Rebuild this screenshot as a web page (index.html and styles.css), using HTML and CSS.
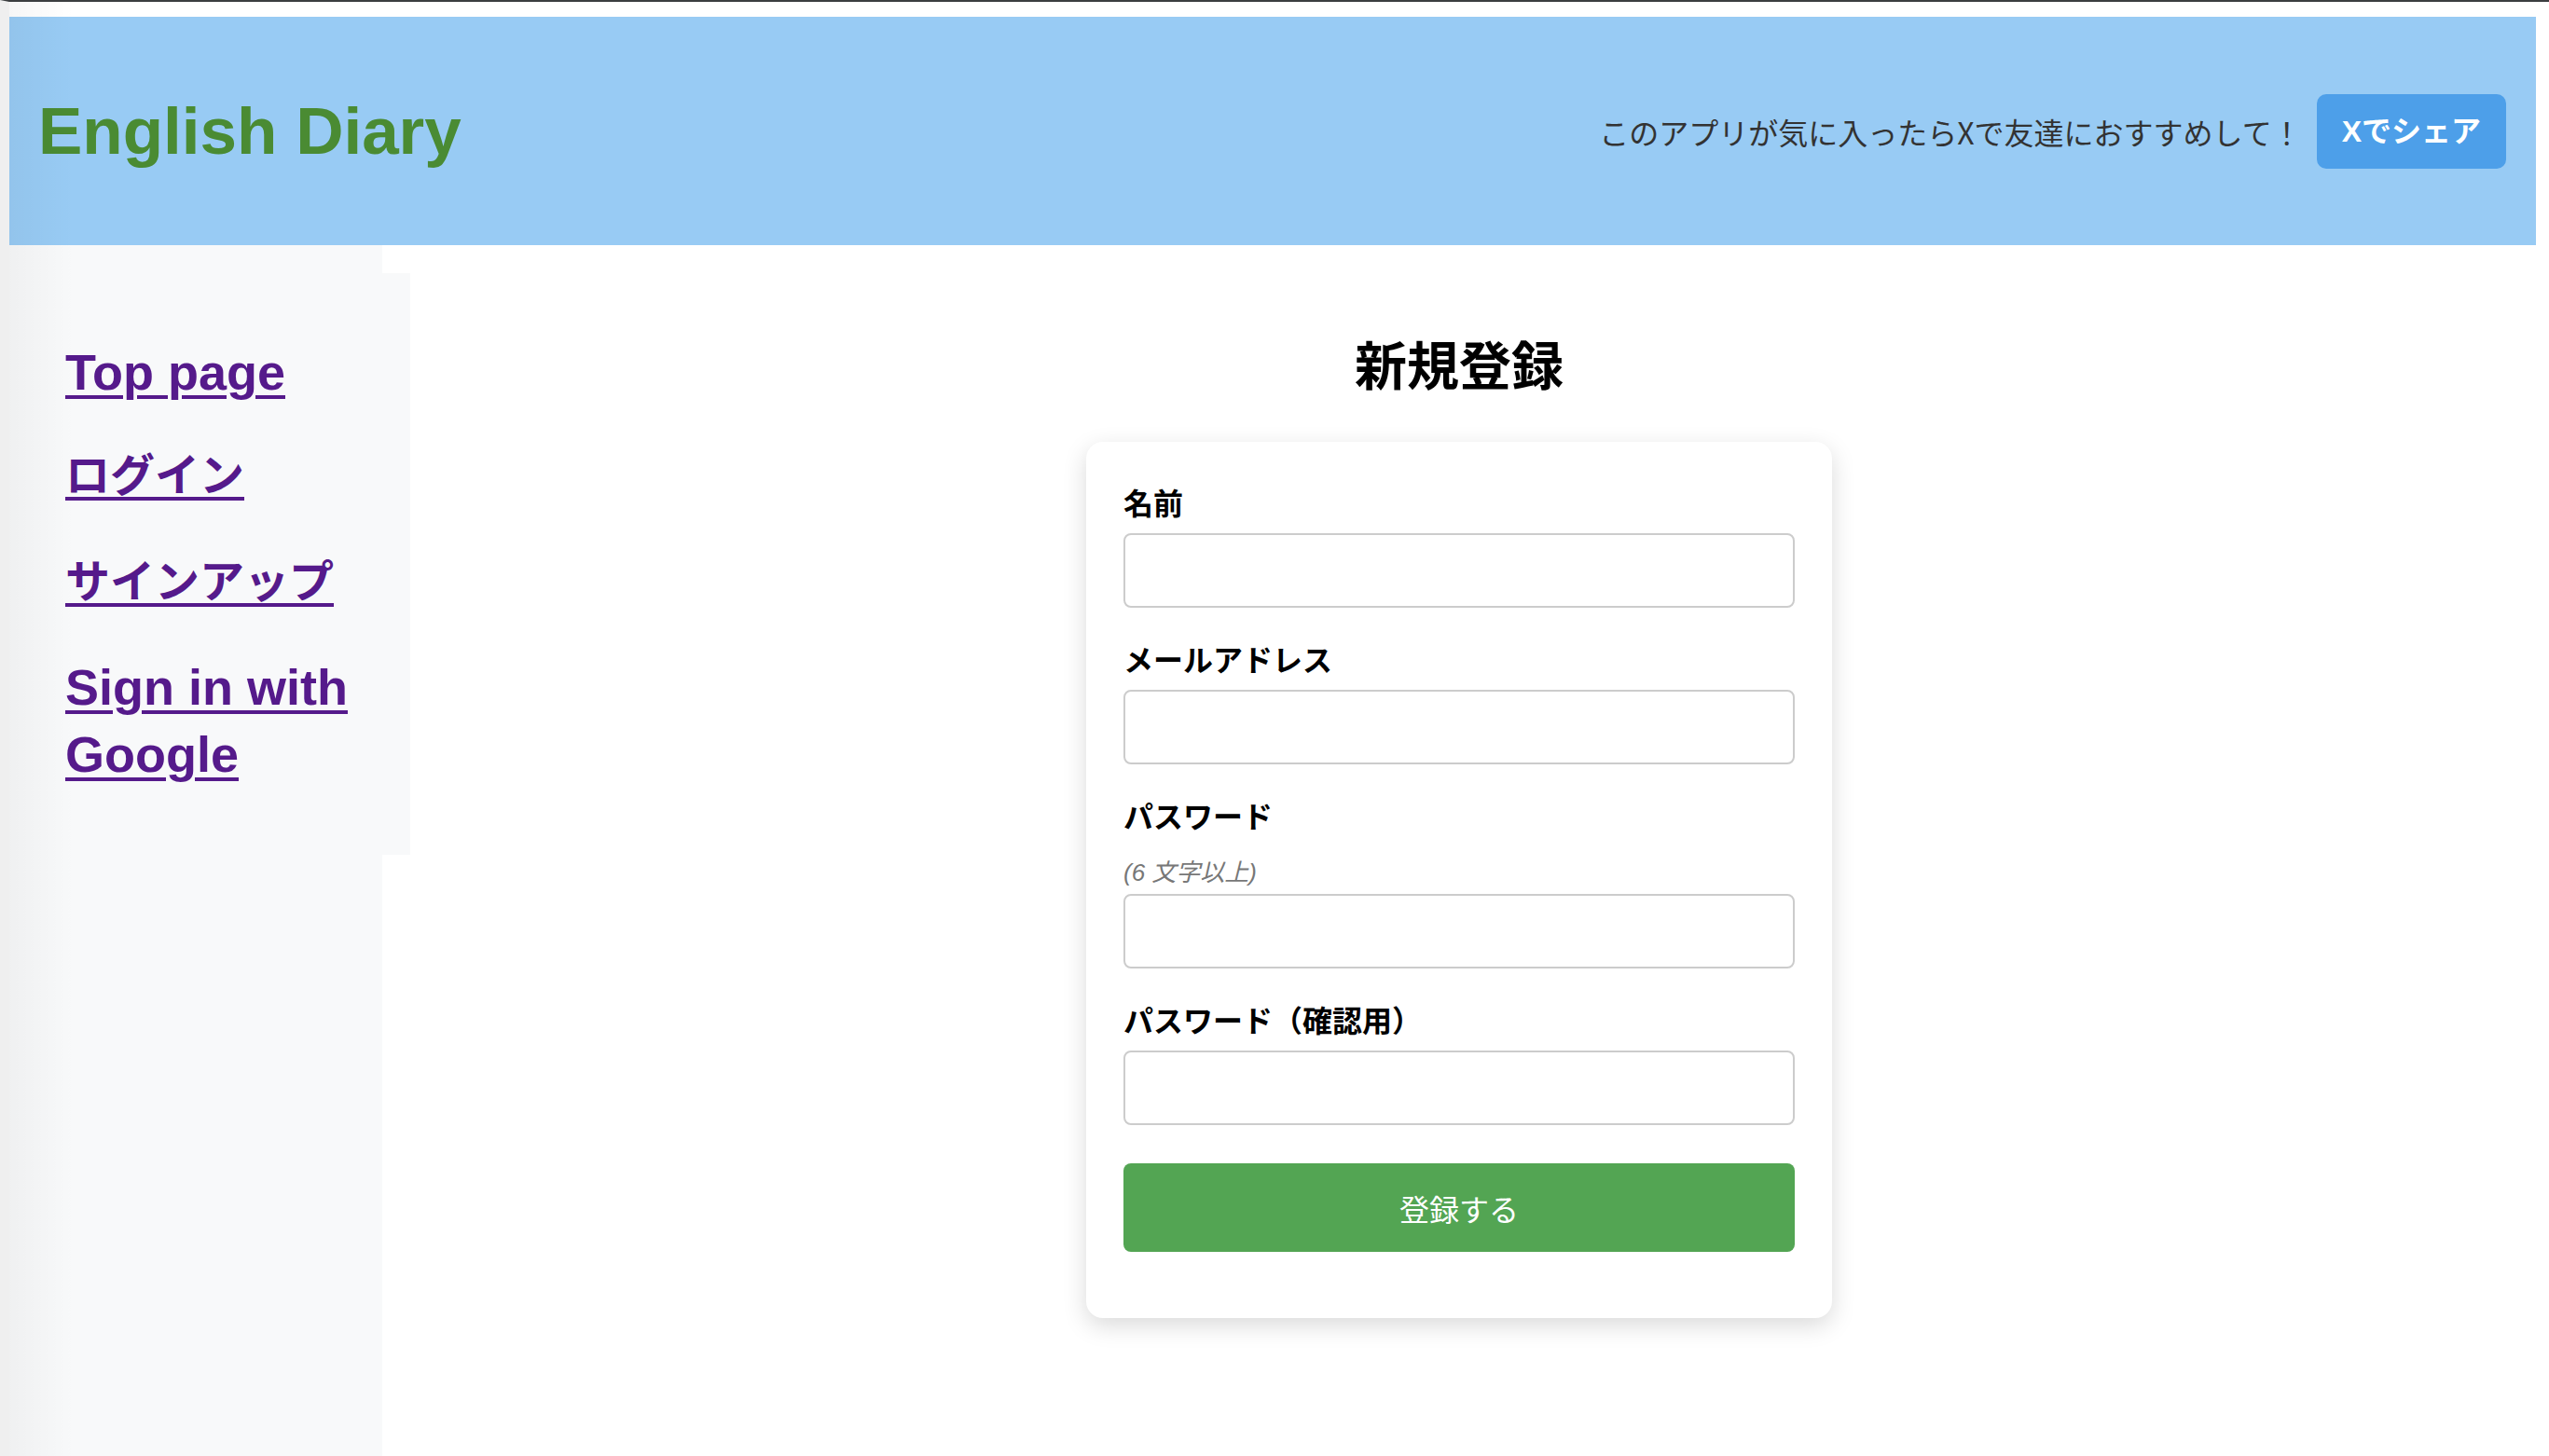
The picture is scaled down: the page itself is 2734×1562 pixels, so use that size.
FILE: index.html
```html
<!DOCTYPE html>
<html lang="ja">
<head>
    <meta charset="UTF-8">
    <meta name="viewport" content="width=device-width, initial-scale=1.0">
    <title>English Diary - 新規登録</title>
    <link rel="stylesheet" href="styles.css">
</head>
<body>
<div class="frame">

    <header class="site-header">
        <h1 class="logo">English Diary</h1>
        <div class="share">
            <p class="share-text">このアプリが気に入ったらXで友達におすすめして！</p>
            <button class="share-btn">Xでシェア</button>
        </div>
    </header>

    <div class="layout">
        <aside class="sidebar">
            <nav class="side-nav">
                <ul>
                    <li class="en"><a href="#">Top page</a></li>
                    <li><a href="#">ログイン</a></li>
                    <li><a href="#">サインアップ</a></li>
                    <li class="en"><a href="#">Sign in with Google</a></li>
                </ul>
            </nav>
        </aside>

        <main class="content">
            <h2 class="page-title">新規登録</h2>
            <form class="signup-card">
                <div class="form-group">
                    <label for="name">名前</label>
                    <input type="text" id="name">
                </div>
                <div class="form-group">
                    <label for="email">メールアドレス</label>
                    <input type="email" id="email">
                </div>
                <div class="form-group">
                    <label for="password">パスワード</label>
                    <em class="hint">(6 文字以上)</em>
                    <input type="password" id="password">
                </div>
                <div class="form-group">
                    <label for="password-confirm">パスワード（確認用）</label>
                    <input type="password" id="password-confirm">
                </div>
                <div class="form-group actions">
                    <button type="submit" class="submit-btn">登録する</button>
                </div>
            </form>
        </main>
    </div>

</div>
</body>
</html>
```

FILE: styles.css
```css
html, body {
    margin: 0;
    padding: 0;
    background-color: #fff;
}
body {
    font-family: "Liberation Sans", "Noto Sans CJK JP", sans-serif;
    color: #000;
}
.frame {
    position: relative;
    display: flex;
    flex-direction: column;
    min-height: 100vh;
    box-sizing: border-box;
    border-top: 2px solid #3b3e40;
    border-left: 10px solid #efefef;
    padding: 16px 14px 0 0;
}
/* soft window shadow on the left edge */
.frame::before {
    content: "";
    position: absolute;
    top: 0;
    bottom: 0;
    left: 0;
    width: 70px;
    background: linear-gradient(to right, rgba(0, 0, 0, 0.035), rgba(0, 0, 0, 0));
    pointer-events: none;
}

/* header */
.site-header {
    height: 245px;
    box-sizing: border-box;
    padding: 0 32px 0 31px;
    background-color: #98cbf4;
    display: flex;
    align-items: center;
    justify-content: space-between;
}
.logo {
    margin: 0;
    font-size: 71px;
    font-weight: bold;
    color: #4a8b33;
}
.share {
    display: flex;
    align-items: center;
}
.share-text {
    margin: 0 16px 0 0;
    font-family: "Noto Sans CJK JP", sans-serif;
    font-size: 32px;
    color: #333;
}
.share-btn {
    font-family: "Liberation Sans", "Noto Sans CJK JP", sans-serif;
    font-size: 32px;
    font-weight: bold;
    line-height: 48px;
    color: #fff;
    background-color: #4d9fe9;
    border: none;
    border-radius: 10px;
    padding: 16px 27px;
}

/* sidebar */
.layout {
    display: flex;
    flex: 1;
}
.sidebar {
    width: 400px;
    flex-shrink: 0;
    background-color: #f8f9fa;
}
.side-nav {
    width: 430px;
    margin-top: 30px;
    background-color: #f8f9fa;
}
.side-nav ul {
    list-style: none;
    margin: 0;
    padding: 70px 50px 72px 60px;
}
.side-nav li {
    margin-bottom: 38px;
    font-size: 48px;
    font-weight: bold;
    line-height: 76px;
}
.side-nav li.en {
    font-size: 54px;
    line-height: 72px;
}
.side-nav li:last-child {
    margin-bottom: 0;
}
.side-nav a {
    color: #551a8b;
    text-decoration-thickness: 4px;
    text-underline-offset: 6px;
}

/* main */
.content {
    flex: 1;
    padding-top: 40px;
}
.page-title {
    margin: 52px 0 52px;
    text-align: center;
    font-family: "Noto Sans CJK JP", sans-serif;
    font-size: 56px;
    line-height: 67px;
    font-weight: bold;
}
.signup-card {
    width: 800px;
    box-sizing: border-box;
    margin: 0 auto;
    padding: 40px 40px 41px;
    background-color: #fff;
    border-radius: 18px;
    box-shadow: 0 8px 26px rgba(0, 0, 0, 0.15);
}
.form-group {
    margin-bottom: 30px;
}
.form-group label {
    display: block;
    font-family: "Noto Sans CJK JP", sans-serif;
    font-size: 32px;
    font-weight: bold;
    line-height: 48px;
    margin-bottom: 10px;
}
.hint {
    display: block;
    font-size: 26px;
    line-height: 40px;
    color: #777;
    margin: 18px 0 3px;
}
.form-group input {
    display: block;
    width: 100%;
    height: 80px;
    box-sizing: border-box;
    border: 2px solid #ccc;
    border-radius: 8px;
    padding: 0 16px;
    font-size: 32px;
}
.actions {
    padding-top: 11px;
}
.submit-btn {
    display: block;
    width: 100%;
    height: 95px;
    border: none;
    border-radius: 8px;
    background-color: #53a553;
    color: #fff;
    font-family: "Noto Sans CJK JP", sans-serif;
    font-size: 32px;
}
```
